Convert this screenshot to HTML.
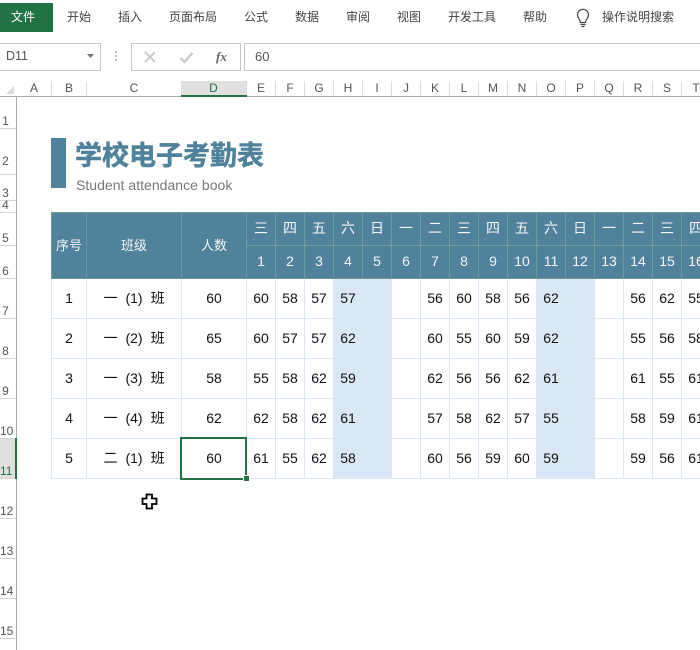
<!DOCTYPE html>
<html lang="zh"><head><meta charset="utf-8">
<style>
html,body{margin:0;padding:0;background:#fff}
#p{position:relative;width:700px;height:650px;overflow:hidden;background:#fff;font-family:"Liberation Sans","Noto Sans CJK SC",sans-serif;color:#444}
.a{position:absolute;white-space:nowrap}
.tab{position:absolute;top:8px;line-height:18px;font-size:12px;color:#444;white-space:nowrap}
.box{position:absolute;box-sizing:border-box;border:1px solid #c6c6c6;background:#fff}
.c{position:absolute;top:81px;height:15px;line-height:15px;text-align:center;font-size:12px;color:#555;border-right:1px solid #dcdcdc;box-sizing:border-box}
.r{position:absolute;left:0;width:16px;box-sizing:border-box;border-bottom:1px solid #d4d4d4;font-size:12px;line-height:14px;color:#555}
.r span{position:absolute;left:0;width:11px;text-align:center;bottom:0}
table{position:absolute;left:51px;top:212px;border-collapse:collapse;table-layout:fixed;width:658px;font-size:14px;color:#111}
td{padding:0;text-align:center;overflow:hidden;white-space:nowrap}
.h td{background:#50829b;color:#f2f6f8;border:1px solid #6b9b9b;height:30px;padding-bottom:2px;font-size:14px}
.d td{border:1px solid #dae7f5;height:37px;padding-bottom:2px}
.d td.hl{background:#dae7f5;border-color:#dae7f5}
.h td.t{font-size:13px;padding-bottom:2px}
.k{margin:0 8px}
</style></head><body><div id="p">

<div class="a" style="left:0;top:3px;width:53px;height:29px;background:#217346;color:#fff;font-size:12px;line-height:28px;box-sizing:border-box;padding-left:11px">文件</div>
<div class="tab" style="left:67px">开始</div>
<div class="tab" style="left:118px">插入</div>
<div class="tab" style="left:169px">页面布局</div>
<div class="tab" style="left:244px">公式</div>
<div class="tab" style="left:295px">数据</div>
<div class="tab" style="left:346px">审阅</div>
<div class="tab" style="left:397px">视图</div>
<div class="tab" style="left:448px">开发工具</div>
<div class="tab" style="left:523px">帮助</div>
<svg class="a" style="left:574px;top:8px" width="18" height="20" viewBox="0 0 18 20" fill="none" stroke="#444" stroke-width="1.2"><path d="M6.5 14.5C6.5 11.5 3.5 10.5 3.5 6.8A5.5 5.5 0 0 1 14.5 6.8C14.500 10.500 11.500 11.500 11.500 14.500Z"/><path d="M6.500 16.500H11.500M7.500 18.500H10.500"/></svg>
<div class="tab" style="left:602px">操作说明搜索</div>

<div class="box" style="left:-2px;top:43px;width:103px;height:28px"></div>
<div class="a" style="left:6px;top:48px;font-size:12.5px;line-height:17px;color:#555">D11</div>
<svg class="a" style="left:86px;top:53px" width="9" height="6"><path d="M1 1H8L4.500 5Z" fill="#777"/></svg>
<svg class="a" style="left:114px;top:51px" width="4" height="12"><path d="M1 1H3M1 5H3M1 9H3" stroke="#aaa" stroke-width="1.500"/></svg>
<div class="box" style="left:131px;top:43px;width:110px;height:28px"></div>
<svg class="a" style="left:143px;top:50px" width="14" height="14"><path d="M2 2L12 12M12 2L2 12" stroke="#c8c8c8" stroke-width="1.800"/></svg>
<svg class="a" style="left:179px;top:50px" width="15" height="14"><path d="M1.500 8L5.500 12L13.500 3" stroke="#c8c8c8" stroke-width="2.200" fill="none"/></svg>
<div class="a" style="left:216px;top:48px;font-family:'Liberation Serif',serif;font-style:italic;font-weight:bold;font-size:13px;line-height:17px;color:#666">fx</div>
<div class="box" style="left:244px;top:43px;width:470px;height:28px"></div>
<div class="a" style="left:255px;top:48px;font-size:13px;line-height:17px;color:#555">60</div>

<svg class="a" style="left:5px;top:85px" width="10" height="10"><path d="M9 1V9H1Z" fill="#dcdcdc"/></svg>
<div class="c" style="left:17px;width:35px;color:#555">A</div>
<div class="c" style="left:52px;width:35px">B</div>
<div class="c" style="left:87px;width:95px">C</div>
<div class="c" style="left:181px;width:66px;background:#e0e0e0;color:#217346">D</div>
<div class="c" style="left:247px;width:29px">E</div>
<div class="c" style="left:276px;width:29px">F</div>
<div class="c" style="left:305px;width:29px">G</div>
<div class="c" style="left:334px;width:29px">H</div>
<div class="c" style="left:363px;width:29px">I</div>
<div class="c" style="left:392px;width:29px">J</div>
<div class="c" style="left:421px;width:29px">K</div>
<div class="c" style="left:450px;width:29px">L</div>
<div class="c" style="left:479px;width:29px">M</div>
<div class="c" style="left:508px;width:29px">N</div>
<div class="c" style="left:537px;width:29px">O</div>
<div class="c" style="left:566px;width:29px">P</div>
<div class="c" style="left:595px;width:29px">Q</div>
<div class="c" style="left:624px;width:29px">R</div>
<div class="c" style="left:653px;width:29px">S</div>
<div class="c" style="left:682px;width:29px">T</div>
<div class="a" style="left:0;top:96px;width:700px;height:1px;background:#ababab"></div>
<div class="a" style="left:181px;top:95px;width:66px;height:2px;background:#217346"></div>

<div class="r" style="top:97px;height:32px"><span>1</span></div>
<div class="r" style="top:129px;height:46px"><span style="bottom:6px">2</span></div>
<div class="r" style="top:175px;height:26px"><span>3</span></div>
<div class="r" style="top:201px;height:12px"><span>4</span></div>
<div class="r" style="top:213px;height:33px"><span>5</span></div>
<div class="r" style="top:246px;height:33px"><span>6</span></div>
<div class="r" style="top:279px;height:40px"><span>7</span></div>
<div class="r" style="top:319px;height:40px"><span>8</span></div>
<div class="r" style="top:359px;height:40px"><span>9</span></div>
<div class="r" style="top:399px;height:40px"><span>10</span></div>
<div class="r" style="top:439px;height:40px;background:#e0e0e0;color:#217346"><span>11</span></div>
<div class="r" style="top:479px;height:40px"><span>12</span></div>
<div class="r" style="top:519px;height:40px"><span>13</span></div>
<div class="r" style="top:559px;height:40px"><span>14</span></div>
<div class="r" style="top:599px;height:40px"><span>15</span></div>
<div class="a" style="left:16px;top:97px;width:1px;height:553px;background:#ababab"></div>
<div class="a" style="left:15px;top:438px;width:2px;height:41px;background:#217346"></div>

<div class="a" style="left:51px;top:138px;width:15px;height:50px;background:#50829b"></div>
<div class="a" style="left:75px;top:138px;font-size:27px;line-height:36px;font-weight:bold;color:#50829b;-webkit-text-stroke:.5px #50829b">学校电子考勤表</div>
<div class="a" style="left:76px;top:176px;font-size:14px;line-height:18px;color:#777;letter-spacing:.03px">Student attendance book</div>

<table>
<colgroup><col style="width:35px"><col style="width:95px"><col style="width:65px"><col span="16" style="width:29px"></colgroup>
<tr class="h"><td rowspan="2" class="t">序号</td><td rowspan="2" class="t">班级</td><td rowspan="2" class="t">人数</td><td>三</td><td>四</td><td>五</td><td>六</td><td>日</td><td>一</td><td>二</td><td>三</td><td>四</td><td>五</td><td>六</td><td>日</td><td>一</td><td>二</td><td>三</td><td>四</td></tr>
<tr class="h"><td>1</td><td>2</td><td>3</td><td>4</td><td>5</td><td>6</td><td>7</td><td>8</td><td>9</td><td>10</td><td>11</td><td>12</td><td>13</td><td>14</td><td>15</td><td>16</td></tr>
<tr class="d"><td>1</td><td>一<span class="k">(1)</span>班</td><td>60</td><td>60</td><td>58</td><td>57</td><td class="hl">57</td><td class="hl"></td><td></td><td>56</td><td>60</td><td>58</td><td>56</td><td class="hl">62</td><td class="hl"></td><td></td><td>56</td><td>62</td><td>55</td></tr>
<tr class="d"><td>2</td><td>一<span class="k">(2)</span>班</td><td>65</td><td>60</td><td>57</td><td>57</td><td class="hl">62</td><td class="hl"></td><td></td><td>60</td><td>55</td><td>60</td><td>59</td><td class="hl">62</td><td class="hl"></td><td></td><td>55</td><td>56</td><td>58</td></tr>
<tr class="d"><td>3</td><td>一<span class="k">(3)</span>班</td><td>58</td><td>55</td><td>58</td><td>62</td><td class="hl">59</td><td class="hl"></td><td></td><td>62</td><td>56</td><td>56</td><td>62</td><td class="hl">61</td><td class="hl"></td><td></td><td>61</td><td>55</td><td>61</td></tr>
<tr class="d"><td>4</td><td>一<span class="k">(4)</span>班</td><td>62</td><td>62</td><td>58</td><td>62</td><td class="hl">61</td><td class="hl"></td><td></td><td>57</td><td>58</td><td>62</td><td>57</td><td class="hl">55</td><td class="hl"></td><td></td><td>58</td><td>59</td><td>61</td></tr>
<tr class="d"><td>5</td><td>二<span class="k">(1)</span>班</td><td>60</td><td>61</td><td>55</td><td>62</td><td class="hl">58</td><td class="hl"></td><td></td><td>60</td><td>56</td><td>59</td><td>60</td><td class="hl">59</td><td class="hl"></td><td></td><td>59</td><td>56</td><td>61</td></tr>
</table>

<div class="a" style="left:180px;top:437px;width:67px;height:43px;box-sizing:border-box;border:2px solid #217346"></div>
<div class="a" style="left:244px;top:476px;width:5px;height:5px;background:#217346;outline:1px solid #fff"></div>
<svg class="a" style="left:141px;top:493px" width="17" height="17" viewBox="0 0 17 17"><path d="M5.500 1.500H11V5.500H15.500V11H11V15.500H5.500V11H1.500V5.500H5.500Z" fill="#fff" stroke="#000" stroke-width="1.800"/></svg>
</div></body></html>
